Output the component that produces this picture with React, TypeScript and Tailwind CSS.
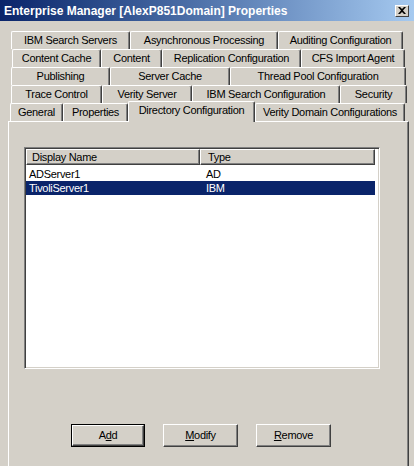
import React from "react";

type TabDef = { label: string; cls: string; selected?: boolean };

const rows: { ml: string; tabs: TabDef[] }[] = [
  {
    ml: "ml-[11px]",
    tabs: [
      { label: "IBM Search Servers", cls: "w-[119px]" },
      { label: "Asynchronous Processing", cls: "w-[148px]" },
      { label: "Auditing Configuration", cls: "w-[125px]" },
    ],
  },
  {
    ml: "ml-[12px]",
    tabs: [
      { label: "Content Cache", cls: "w-[89px]" },
      { label: "Content", cls: "w-[61px]" },
      { label: "Replication Configuration", cls: "w-[139px]" },
      { label: "CFS Import Agent", cls: "w-[104px]" },
    ],
  },
  {
    ml: "ml-[11px]",
    tabs: [
      { label: "Publishing", cls: "w-[99px]" },
      { label: "Server Cache", cls: "w-[120px]" },
      { label: "Thread Pool Configuration", cls: "w-[176px]" },
    ],
  },
  {
    ml: "ml-[11px]",
    tabs: [
      { label: "Trace Control", cls: "w-[91px]" },
      { label: "Verity Server", cls: "w-[90px]" },
      { label: "IBM Search Configuration", cls: "w-[148px]" },
      { label: "Security", cls: "w-[67px]" },
    ],
  },
  {
    ml: "ml-[10px]",
    tabs: [
      { label: "General", cls: "w-[53px]" },
      { label: "Properties", cls: "w-[65px]" },
      { label: "Directory Configuration", cls: "w-[127px]", selected: true },
      { label: "Verity Domain Configurations", cls: "w-[150px]" },
    ],
  },
];

function Tab({ t }: { t: TabDef }) {
  if (t.selected) {
    return (
      <div
        className={`${t.cls} relative z-10 -mt-[2px] h-[21px] pb-[3px] shrink-0 flex items-center justify-center bg-[#d4d0c8] border-t border-l border-r border-t-white border-l-white border-r-[#404040] shadow-[inset_-1px_0_0_#808080] rounded-t-[2px] whitespace-nowrap`}
      >
        {t.label}
      </div>
    );
  }
  return (
    <div
      className={`${t.cls} h-[18px] shrink-0 flex items-center justify-center bg-[#d4d0c8] border-t border-l border-r border-t-white border-l-white border-r-[#404040] shadow-[inset_-1px_0_0_#808080] rounded-t-[2px] whitespace-nowrap`}
    >
      {t.label}
    </div>
  );
}

function Btn({
  children,
  w,
  def,
}: {
  children: React.ReactNode;
  w: string;
  def?: boolean;
}) {
  const inner = (
    <div className="h-full w-full flex items-center justify-center border border-t-white border-l-white border-r-[#404040] border-b-[#404040] shadow-[inset_-1px_-1px_0_#808080] bg-[#d4d0c8]">
      {children}
    </div>
  );
  if (def) {
    return <div className={`${w} h-[23px] border border-black shrink-0`}>{inner}</div>;
  }
  return <div className={`${w} h-[23px] shrink-0`}>{inner}</div>;
}

export default function App() {
  return (
    <div className="w-[414px] h-[466px] overflow-hidden bg-[#d4d0c8] font-['Liberation_Sans',Arial,sans-serif] text-[11px] tracking-[-0.3px] text-black select-none">
      {/* Title bar */}
      <div className="h-[21px] flex items-center justify-between pl-[4px] pr-[5px] bg-linear-to-r from-[#0a246a] to-[#a6caf0]">
        <span className="text-[12px] font-bold text-white tracking-normal whitespace-nowrap">
          Enterprise Manager [AlexP851Domain] Properties
        </span>
        <div className="w-[14px] h-[12px] flex items-center justify-center bg-[#d4d0c8] border border-t-white border-l-white border-r-[#404040] border-b-[#404040]">
          <svg width="8" height="7" viewBox="0 0 8 7">
            <path d="M0 0 L2 0 L4 2 L6 0 L8 0 L5 3.5 L8 7 L6 7 L4 5 L2 7 L0 7 L3 3.5 Z" fill="#000" />
          </svg>
        </div>
      </div>

      {/* Tab rows */}
      <div className="mt-[10px] flex flex-col">
        {rows.map((r, i) => (
          <div key={i} className={`${r.ml} h-[18px] flex items-start`}>
            {r.tabs.map((t) => (
              <Tab key={t.label} t={t} />
            ))}
          </div>
        ))}
      </div>

      {/* Panel */}
      <div className="ml-[8px] w-[401px] h-[400px] border-t border-l border-r border-t-white border-l-white border-r-[#404040] shadow-[inset_-1px_0_0_#808080] flex flex-col">
        {/* List view */}
        <div className="ml-[15px] mt-[25px] w-[356px] h-[222px] bg-white border border-t-[#808080] border-l-[#808080] border-r-white border-b-white shadow-[inset_1px_1px_0_#404040,inset_-1px_-1px_0_#d4d0c8] p-[1px]">
          <div className="flex h-[16px]">
            <div className="w-[174px] h-[16px] flex items-center pl-[5px] bg-[#d4d0c8] border border-t-white border-l-white border-r-[#404040] border-b-[#404040] shadow-[inset_-1px_-1px_0_#808080]">
              Display Name
            </div>
            <div className="w-[175px] h-[16px] flex items-center pl-[7px] bg-[#d4d0c8] border border-t-white border-l-white border-r-[#404040] border-b-[#404040] shadow-[inset_-1px_-1px_0_#808080]">
              Type
            </div>
          </div>
          <div className="mt-[2px] flex h-[14px] w-[349px] items-center">
            <div className="w-[174px] pl-[3px]">ADServer1</div>
            <div className="pl-[6px]">AD</div>
          </div>
          <div className="flex h-[14px] w-[349px] items-center bg-[#0a246a] text-white">
            <div className="w-[174px] pl-[3px]">TivoliServer1</div>
            <div className="pl-[6px]">IBM</div>
          </div>
        </div>

        {/* Buttons */}
        <div className="mt-[55px] ml-[62px] flex gap-[18px]">
          <Btn w="w-[74px]" def>
            <span>
              A<span className="underline">d</span>d
            </span>
          </Btn>
          <Btn w="w-[75px]">
            <span>
              <span className="underline">M</span>odify
            </span>
          </Btn>
          <Btn w="w-[75px]">
            <span>
              <span className="underline">R</span>emove
            </span>
          </Btn>
        </div>
      </div>
    </div>
  );
}
